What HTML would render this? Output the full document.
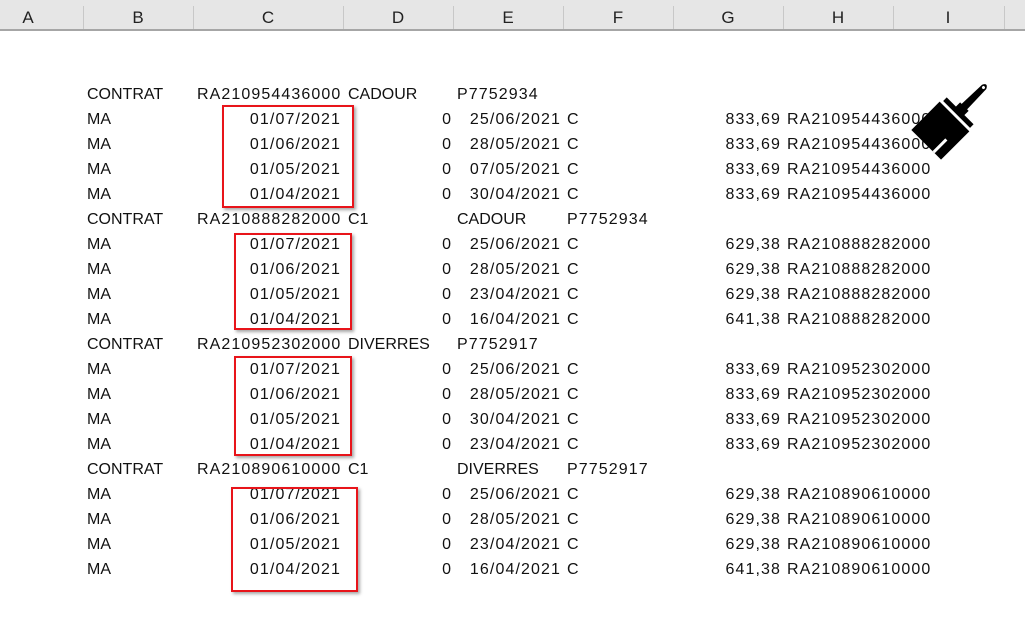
<!DOCTYPE html>
<html><head><meta charset="utf-8"><style>
body{margin:0;width:1025px;height:638px;background:#fff;position:relative;overflow:hidden;font-family:"Liberation Sans",sans-serif;}
.hdr{position:absolute;left:0;top:0;width:1025px;height:29px;background:#e6e6e6;border-bottom:2px solid #a6a6a6;}
.sep{position:absolute;top:6px;height:23px;width:1px;background:#c8c8c8;}
.hl{position:absolute;top:8px;font-size:17px;color:#222;transform:translateX(-50%);}
.r{position:absolute;left:0;width:1025px;height:25px;line-height:25px;font-size:16px;color:#111;}
.r span{position:absolute;top:0;white-space:nowrap;}
.n{letter-spacing:1.1px;}
.box{position:absolute;border:2px solid #e8141a;box-shadow:2px 2px 3px rgba(0,0,0,.35);}
</style></head><body>
<div class="hdr">
<div class="sep" style="left:83px"></div><div class="sep" style="left:193px"></div><div class="sep" style="left:343px"></div><div class="sep" style="left:453px"></div><div class="sep" style="left:563px"></div><div class="sep" style="left:673px"></div><div class="sep" style="left:783px"></div><div class="sep" style="left:893px"></div><div class="sep" style="left:1004px"></div>
<span class="hl" style="left:28px">A</span><span class="hl" style="left:138px">B</span><span class="hl" style="left:268px">C</span><span class="hl" style="left:398px">D</span><span class="hl" style="left:508px">E</span><span class="hl" style="left:618px">F</span><span class="hl" style="left:728px">G</span><span class="hl" style="left:838px">H</span><span class="hl" style="left:948px">I</span>
</div>

<!-- group 1 -->
<div class="r" style="top:82px"><span style="left:87px">CONTRAT</span><span class="n" style="left:197px">RA210954436000</span><span style="left:348px">CADOUR</span><span class="n" style="left:457px">P7752934</span></div>
<div class="r" style="top:107px"><span style="left:87px">MA</span><span class="n" style="right:684px">01/07/2021</span><span style="right:574px">0</span><span class="n" style="right:464px">25/06/2021</span><span style="left:567px">C</span><span class="n" style="right:244px">833,69</span><span class="n" style="left:787px">RA210954436000</span></div>
<div class="r" style="top:132px"><span style="left:87px">MA</span><span class="n" style="right:684px">01/06/2021</span><span style="right:574px">0</span><span class="n" style="right:464px">28/05/2021</span><span style="left:567px">C</span><span class="n" style="right:244px">833,69</span><span class="n" style="left:787px">RA210954436000</span></div>
<div class="r" style="top:157px"><span style="left:87px">MA</span><span class="n" style="right:684px">01/05/2021</span><span style="right:574px">0</span><span class="n" style="right:464px">07/05/2021</span><span style="left:567px">C</span><span class="n" style="right:244px">833,69</span><span class="n" style="left:787px">RA210954436000</span></div>
<div class="r" style="top:182px"><span style="left:87px">MA</span><span class="n" style="right:684px">01/04/2021</span><span style="right:574px">0</span><span class="n" style="right:464px">30/04/2021</span><span style="left:567px">C</span><span class="n" style="right:244px">833,69</span><span class="n" style="left:787px">RA210954436000</span></div>
<!-- group 2 -->
<div class="r" style="top:207px"><span style="left:87px">CONTRAT</span><span class="n" style="left:197px">RA210888282000</span><span style="left:348px">C1</span><span style="left:457px">CADOUR</span><span class="n" style="left:567px">P7752934</span></div>
<div class="r" style="top:232px"><span style="left:87px">MA</span><span class="n" style="right:684px">01/07/2021</span><span style="right:574px">0</span><span class="n" style="right:464px">25/06/2021</span><span style="left:567px">C</span><span class="n" style="right:244px">629,38</span><span class="n" style="left:787px">RA210888282000</span></div>
<div class="r" style="top:257px"><span style="left:87px">MA</span><span class="n" style="right:684px">01/06/2021</span><span style="right:574px">0</span><span class="n" style="right:464px">28/05/2021</span><span style="left:567px">C</span><span class="n" style="right:244px">629,38</span><span class="n" style="left:787px">RA210888282000</span></div>
<div class="r" style="top:282px"><span style="left:87px">MA</span><span class="n" style="right:684px">01/05/2021</span><span style="right:574px">0</span><span class="n" style="right:464px">23/04/2021</span><span style="left:567px">C</span><span class="n" style="right:244px">629,38</span><span class="n" style="left:787px">RA210888282000</span></div>
<div class="r" style="top:307px"><span style="left:87px">MA</span><span class="n" style="right:684px">01/04/2021</span><span style="right:574px">0</span><span class="n" style="right:464px">16/04/2021</span><span style="left:567px">C</span><span class="n" style="right:244px">641,38</span><span class="n" style="left:787px">RA210888282000</span></div>
<!-- group 3 -->
<div class="r" style="top:332px"><span style="left:87px">CONTRAT</span><span class="n" style="left:197px">RA210952302000</span><span style="left:348px">DIVERRES</span><span class="n" style="left:457px">P7752917</span></div>
<div class="r" style="top:357px"><span style="left:87px">MA</span><span class="n" style="right:684px">01/07/2021</span><span style="right:574px">0</span><span class="n" style="right:464px">25/06/2021</span><span style="left:567px">C</span><span class="n" style="right:244px">833,69</span><span class="n" style="left:787px">RA210952302000</span></div>
<div class="r" style="top:382px"><span style="left:87px">MA</span><span class="n" style="right:684px">01/06/2021</span><span style="right:574px">0</span><span class="n" style="right:464px">28/05/2021</span><span style="left:567px">C</span><span class="n" style="right:244px">833,69</span><span class="n" style="left:787px">RA210952302000</span></div>
<div class="r" style="top:407px"><span style="left:87px">MA</span><span class="n" style="right:684px">01/05/2021</span><span style="right:574px">0</span><span class="n" style="right:464px">30/04/2021</span><span style="left:567px">C</span><span class="n" style="right:244px">833,69</span><span class="n" style="left:787px">RA210952302000</span></div>
<div class="r" style="top:432px"><span style="left:87px">MA</span><span class="n" style="right:684px">01/04/2021</span><span style="right:574px">0</span><span class="n" style="right:464px">23/04/2021</span><span style="left:567px">C</span><span class="n" style="right:244px">833,69</span><span class="n" style="left:787px">RA210952302000</span></div>
<!-- group 4 -->
<div class="r" style="top:457px"><span style="left:87px">CONTRAT</span><span class="n" style="left:197px">RA210890610000</span><span style="left:348px">C1</span><span style="left:457px">DIVERRES</span><span class="n" style="left:567px">P7752917</span></div>
<div class="r" style="top:482px"><span style="left:87px">MA</span><span class="n" style="right:684px">01/07/2021</span><span style="right:574px">0</span><span class="n" style="right:464px">25/06/2021</span><span style="left:567px">C</span><span class="n" style="right:244px">629,38</span><span class="n" style="left:787px">RA210890610000</span></div>
<div class="r" style="top:507px"><span style="left:87px">MA</span><span class="n" style="right:684px">01/06/2021</span><span style="right:574px">0</span><span class="n" style="right:464px">28/05/2021</span><span style="left:567px">C</span><span class="n" style="right:244px">629,38</span><span class="n" style="left:787px">RA210890610000</span></div>
<div class="r" style="top:532px"><span style="left:87px">MA</span><span class="n" style="right:684px">01/05/2021</span><span style="right:574px">0</span><span class="n" style="right:464px">23/04/2021</span><span style="left:567px">C</span><span class="n" style="right:244px">629,38</span><span class="n" style="left:787px">RA210890610000</span></div>
<div class="r" style="top:557px"><span style="left:87px">MA</span><span class="n" style="right:684px">01/04/2021</span><span style="right:574px">0</span><span class="n" style="right:464px">16/04/2021</span><span style="left:567px">C</span><span class="n" style="right:244px">641,38</span><span class="n" style="left:787px">RA210890610000</span></div>

<div class="box" style="left:222px;top:105px;width:128px;height:99px"></div>
<div class="box" style="left:234px;top:233px;width:114px;height:93px"></div>
<div class="box" style="left:234px;top:356px;width:114px;height:96px"></div>
<div class="box" style="left:231px;top:487px;width:123px;height:101px"></div>

<svg style="position:absolute;left:0;top:0" width="1025" height="638">
<g transform="translate(946,125) rotate(45)">
<path d="M-4,-22 L-3,-54 Q0,-60 3,-54 L4,-22 Z" fill="#000"/>
<circle cx="0" cy="-53" r="1.5" fill="#fff"/>
<rect x="-6" y="-26" width="12" height="8" fill="#000"/>
<rect x="-19" y="-20" width="38" height="5" fill="#000"/>
<rect x="-21" y="-12" width="42" height="40" fill="#000"/>
<rect x="9" y="10" width="3" height="18" fill="#fff"/>
</g>
</svg>
</body></html>
